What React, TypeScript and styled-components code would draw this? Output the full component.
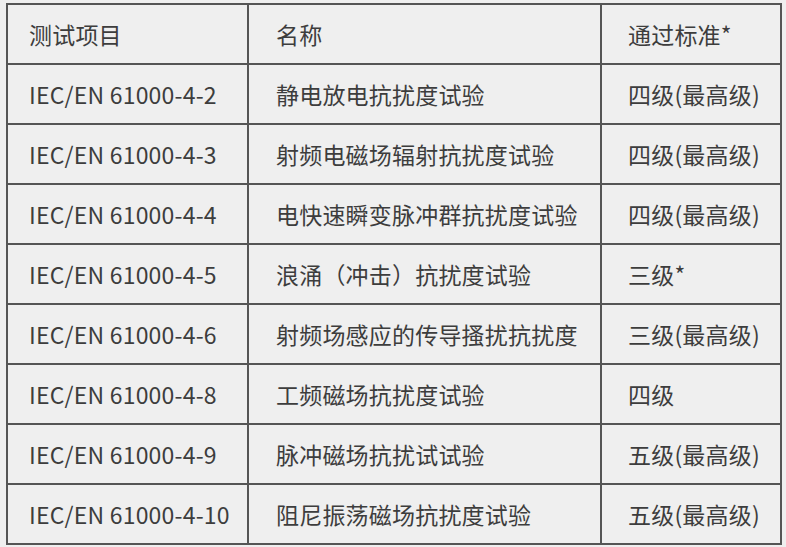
import styled, { createGlobalStyle } from 'styled-components';

const GlobalStyle = createGlobalStyle`
  html, body {
    margin: 0;
    padding: 0;
    background-color: #efefef;
  }
  body {
    font-family: 'Noto Sans CJK SC', 'Noto Sans', sans-serif;
    color: #3d3d3d;
  }
`;

const Page = styled.div`
  width: 786px;
  height: 547px;
  padding: 3px 0 0 6px;
  box-sizing: border-box;
  background-color: #efefef;
`;

const Table = styled.table`
  width: 774px;
  border-collapse: collapse;
  border: 2px solid #555;
  table-layout: fixed;
`;

const Col = styled.col<{ $width: number }>`
  width: ${(props) => props.$width}px;
`;

const Row = styled.tr`
  height: 60px;
`;

const Cell = styled.td<{ $pad: number }>`
  padding: 0 0 0 ${(props) => props.$pad}px;
  border: 2px solid #555;
  font-size: 23px;
  line-height: 1;
  letter-spacing: 0.2px;
  vertical-align: middle;
  white-space: nowrap;
`;

const rows = [
  ['IEC/EN 61000-4-2', '静电放电抗扰度试验', '四级(最高级)'],
  ['IEC/EN 61000-4-3', '射频电磁场辐射抗扰度试验', '四级(最高级)'],
  ['IEC/EN 61000-4-4', '电快速瞬变脉冲群抗扰度试验', '四级(最高级)'],
  ['IEC/EN 61000-4-5', '浪涌（冲击）抗扰度试验', '三级*'],
  ['IEC/EN 61000-4-6', '射频场感应的传导搔扰抗扰度', '三级(最高级)'],
  ['IEC/EN 61000-4-8', '工频磁场抗扰度试验', '四级'],
  ['IEC/EN 61000-4-9', '脉冲磁场抗扰试试验', '五级(最高级)'],
  ['IEC/EN 61000-4-10', '阻尼振荡磁场抗扰度试验', '五级(最高级)'],
];

const App = () => {
  return (
    <Page>
      <GlobalStyle />
      <Table>
        <colgroup>
          <Col $width={241} />
          <Col $width={353} />
          <Col $width={180} />
        </colgroup>
        <tbody>
          <Row>
            <Cell $pad={21}>测试项目</Cell>
            <Cell $pad={27}>名称</Cell>
            <Cell $pad={26}>通过标准*</Cell>
          </Row>
          {rows.map((r) => (
            <Row key={r[0]}>
              <Cell $pad={21}>{r[0]}</Cell>
              <Cell $pad={27}>{r[1]}</Cell>
              <Cell $pad={26}>{r[2]}</Cell>
            </Row>
          ))}
        </tbody>
      </Table>
    </Page>
  );
};

export default App;
